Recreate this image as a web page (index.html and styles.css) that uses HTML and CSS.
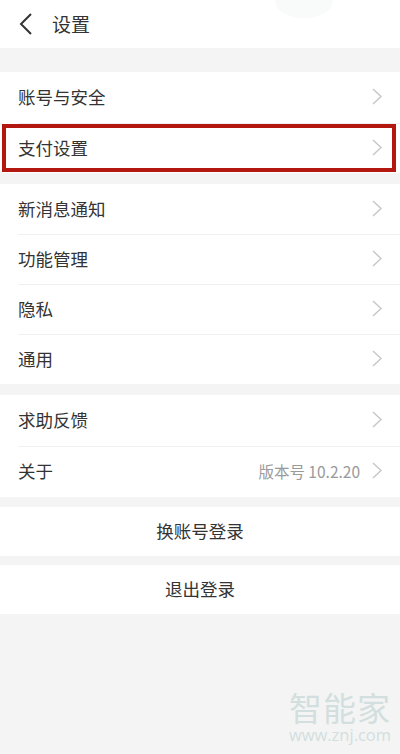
FILE: index.html
```html
<!DOCTYPE html>
<html lang="zh-CN">
<head>
    <meta charset="UTF-8">
    <meta name="viewport" content="width=device-width, initial-scale=1.0">
    <title>设置</title>
    <link rel="stylesheet" href="styles.css">
</head>
<body>
    <div class="page">
        <header class="topbar">
            <svg class="back" width="14" height="22" viewBox="0 0 14 22">
                <path d="M12 1 L2 11 L12 21" fill="none" stroke="#333" stroke-width="2"/>
            </svg>
            <span class="title">设置</span>
            <span class="blob"></span>
        </header>

        <div class="group group-first">
            <div class="row"><span class="label">账号与安全</span><svg class="arrow" width="10" height="17" viewBox="0 0 10 17"><path d="M1 1 L9 8.5 L1 16" fill="none" stroke="#c6c6c6" stroke-width="1.4"/></svg></div>
            <div class="row marked"><span class="label">支付设置</span><svg class="arrow" width="10" height="17" viewBox="0 0 10 17"><path d="M1 1 L9 8.5 L1 16" fill="none" stroke="#c6c6c6" stroke-width="1.4"/></svg></div>
        </div>

        <div class="group">
            <div class="row"><span class="label">新消息通知</span><svg class="arrow" width="10" height="17" viewBox="0 0 10 17"><path d="M1 1 L9 8.5 L1 16" fill="none" stroke="#c6c6c6" stroke-width="1.4"/></svg></div>
            <div class="row"><span class="label">功能管理</span><svg class="arrow" width="10" height="17" viewBox="0 0 10 17"><path d="M1 1 L9 8.5 L1 16" fill="none" stroke="#c6c6c6" stroke-width="1.4"/></svg></div>
            <div class="row"><span class="label">隐私</span><svg class="arrow" width="10" height="17" viewBox="0 0 10 17"><path d="M1 1 L9 8.5 L1 16" fill="none" stroke="#c6c6c6" stroke-width="1.4"/></svg></div>
            <div class="row"><span class="label">通用</span><svg class="arrow" width="10" height="17" viewBox="0 0 10 17"><path d="M1 1 L9 8.5 L1 16" fill="none" stroke="#c6c6c6" stroke-width="1.4"/></svg></div>
        </div>

        <div class="group group-help">
            <div class="row"><span class="label">求助反馈</span><svg class="arrow" width="10" height="17" viewBox="0 0 10 17"><path d="M1 1 L9 8.5 L1 16" fill="none" stroke="#c6c6c6" stroke-width="1.4"/></svg></div>
            <div class="row"><span class="label">关于</span><span class="value">版本号 10.2.20</span><svg class="arrow" width="10" height="17" viewBox="0 0 10 17"><path d="M1 1 L9 8.5 L1 16" fill="none" stroke="#c6c6c6" stroke-width="1.4"/></svg></div>
        </div>

        <div class="group">
            <div class="action">换账号登录</div>
        </div>
        <div class="group group-tight">
            <div class="action">退出登录</div>
        </div>

        <div class="watermark">
            <div class="wm-name">智能家</div>
            <div class="wm-url">www.znj.com</div>
        </div>
    </div>
</body>
</html>
```

FILE: styles.css
```css
* {
    box-sizing: border-box;
    margin: 0;
    padding: 0;
}
body {
    font-family: "Noto Sans CJK SC", "Noto Sans", sans-serif;
    background: #f4f4f4;
    color: #333;
    width: 400px;
    height: 754px;
    overflow: hidden;
}
.page {
    position: relative;
    height: 754px;
}
.topbar {
    position: relative;
    height: 48px;
    background: #fff;
    display: flex;
    align-items: center;
    padding-left: 19px;
    padding-bottom: 2px;
}
.back {
    display: block;
    margin-top: 2px;
}
.title {
    font-size: 19px;
    margin-left: 19px;
    color: #333;
    line-height: 1;
}
.blob {
    position: absolute;
    top: -16px;
    left: 275px;
    width: 58px;
    height: 34px;
    border-radius: 50%;
    background: #f9fbfb;
}
.group {
    background: #fff;
    margin-top: 11px;
}
.group-first {
    margin-top: 24px;
}
.group-help + .group {
    margin-top: 10px;
}
.group-tight {
    margin-top: 9px;
}
.row {
    position: relative;
    height: 50px;
    display: flex;
    align-items: center;
    padding: 0 18px 2px 18px;
    font-size: 17.5px;
}
.group-first .row:first-child,
.group-help .row {
    height: 51px;
}
.row + .row::before {
    content: "";
    position: absolute;
    top: 0;
    left: 18px;
    right: 0;
    height: 1px;
    background: #f0f0f0;
}
.label {
    flex: 1;
}
.value {
    color: #9a9a9a;
    font-size: 15.5px;
    margin-right: 12px;
}
.arrow {
    display: block;
}
.marked::after {
    content: "";
    position: absolute;
    top: 1px;
    left: 2px;
    right: 4px;
    bottom: 1px;
    border: 4px solid #b3170f;
}
.action {
    height: 49px;
    display: flex;
    align-items: center;
    justify-content: center;
    font-size: 17.5px;
    padding-bottom: 2px;
}
.watermark {
    position: absolute;
    left: 288px;
    width: 104px;
    top: 690px;
    text-align: center;
    color: #d2dfde;
}
.wm-name {
    font-size: 33px;
    line-height: 34px;
    letter-spacing: 1px;
}
.wm-url {
    font-family: "Open Sans", sans-serif;
    font-size: 16.5px;
    line-height: 18px;
    margin-top: 2px;
}
```
